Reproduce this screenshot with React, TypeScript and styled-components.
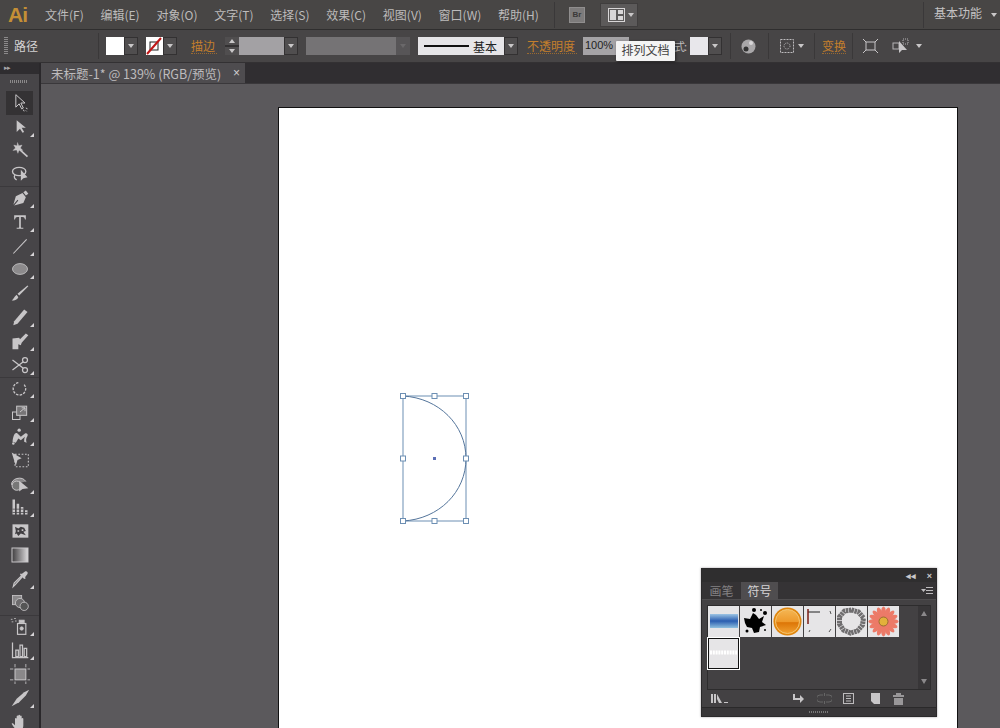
import React from 'react'
import styled, { createGlobalStyle } from 'styled-components'

const Global = createGlobalStyle`
  html, body { margin: 0; padding: 0; background: #5b595c; }
  * { box-sizing: border-box; }
`

const Page = styled.div`
  width: 1000px;
  height: 728px;
  overflow: hidden;
  position: relative;
  display: flex;
  flex-direction: column;
  font-family: "Noto Sans CJK SC", "Liberation Sans", sans-serif;
  font-size: 12px;
  color: #c4c2c3;
`

const MenuBar = styled.div`
  height: 30px;
  flex: none;
  display: flex;
  align-items: center;
  background: #484645;
  border-bottom: 1px solid #2f2e2e;
`

const Logo = styled.div`
  width: 45px;
  padding-left: 8px;
  font-family: "Liberation Sans", sans-serif;
  font-weight: 700;
  font-size: 21px;
  letter-spacing: -1px;
  color: #c48f36;
`

const Menu = styled.div`
  display: flex;
  gap: 16.75px;
  width: 509px;
  padding-bottom: 1px;
  color: #bdbbbb;
`

const Divider = styled.div<{ $h?: number; $ml?: number }>`
  width: 1px;
  height: ${p => p.$h ?? 26}px;
  flex: none;
  margin-left: ${p => p.$ml ?? 0}px;
  background: #3a3839;
`

const Bridge = styled.div`
  width: 16px;
  height: 16px;
  margin-left: 14px;
  background: #7d7b7b;
  border: 1px solid #908e8e;
  color: #3a3939;
  font: 700 8px "Liberation Sans", sans-serif;
  display: flex;
  align-items: center;
  justify-content: center;
`

const ArrangeButton = styled.div`
  width: 38px;
  height: 24px;
  margin-left: 15px;
  display: flex;
  align-items: center;
  gap: 2px;
  padding-left: 7px;
  background: #5c5a5a;
  border: 1px solid #403e3e;
`

const Workspace = styled.div`
  margin-left: auto;
  padding-right: 3px;
  display: flex;
  align-items: center;
  height: 100%;
`

const WorkspaceName = styled.span`
  margin-left: 10px;
  width: 56px;
  padding-bottom: 4px;
`

const ControlBar = styled.div`
  height: 33px;
  flex: none;
  display: flex;
  align-items: center;
  background: #474546;
  border-bottom: 1px solid #333133;
`

const Grip = styled.div`
  width: 4px;
  height: 18px;
  margin-left: 4px;
  background: repeating-linear-gradient(#8b898a 0 1px, transparent 1px 2px);
`

const PathLabel = styled.span`
  margin-left: 6px;
  width: 84px;
  color: #d4d2d3;
  padding-bottom: 1px;
`

const Swatch = styled.div<{ $w?: number; $ml?: number; $bg?: string }>`
  width: ${p => p.$w ?? 18}px;
  height: 18px;
  flex: none;
  margin-left: ${p => p.$ml ?? 0}px;
  background: ${p => p.$bg ?? '#fff'};
`

const Caret = styled.div<{ $w?: number; $dim?: boolean; $bg?: string; $ml?: number }>`
  width: ${p => p.$w ?? 14}px;
  height: 18px;
  flex: none;
  margin-left: ${p => p.$ml ?? 0}px;
  display: flex;
  align-items: center;
  justify-content: center;
  background: ${p => p.$bg ?? '#504e4f'};
  box-shadow: ${p => (p.$bg ? 'none' : 'inset 0 0 0 1px #333132')};
  &::after {
    content: '';
    border-left: 3.5px solid transparent;
    border-right: 3.5px solid transparent;
    border-top: 4px solid ${p => (p.$dim ? '#6a686a' : '#c9c7c8')};
  }
`

const Hot = styled.span<{ $ml: number; $w: number }>`
  margin-left: ${p => p.$ml}px;
  width: ${p => p.$w}px;
  flex: none;
  line-height: 15px;
  color: #c47f2c;
  border-bottom: 1px dotted #9a6a30;
`

const Stepper = styled.div`
  width: 14px;
  height: 18px;
  margin-left: 8px;
  display: flex;
  flex-direction: column;
  justify-content: space-between;
  background: #333132;
`

const Step = styled.div<{ $up?: boolean }>`
  height: 8px;
  display: flex;
  align-items: center;
  justify-content: center;
  background: #504e4f;
  &::after {
    content: '';
    border-left: 3px solid transparent;
    border-right: 3px solid transparent;
    border-${p => (p.$up ? 'bottom' : 'top')}: 4px solid #c9c7c8;
  }
`

const Field = styled.div<{ $w: number; $bg: string; $ml?: number }>`
  width: ${p => p.$w}px;
  height: 18px;
  flex: none;
  margin-left: ${p => p.$ml ?? 0}px;
  background: ${p => p.$bg};
`

const StrokeField = styled.div`
  width: 86px;
  height: 18px;
  margin-left: 8px;
  flex: none;
  display: flex;
  align-items: center;
  gap: 4px;
  padding-left: 6px;
  background: #e6e5e8;
  color: #222;
  font-size: 12px;
  &::before {
    content: '';
    width: 45px;
    height: 2px;
    background: #111;
  }
`

const Opacity = styled.div`
  width: 46px;
  height: 18px;
  margin-left: 6px;
  flex: none;
  padding-left: 2px;
  background: #a5a3a6;
  color: #1f1f1f;
  font: 11px/17px "Liberation Sans", sans-serif;
`

const StyleLabel = styled.span`
  margin-left: 45px;
  width: 11px;
  flex: none;
  color: #bdbbbb;
  font-size: 11px;
  letter-spacing: -1px;
  white-space: nowrap;
`

const IconSlot = styled.div<{ $ml: number }>`
  margin-left: ${p => p.$ml}px;
  flex: none;
  display: flex;
  align-items: center;
  gap: 3px;
`

const Tip = styled.div`
  position: absolute;
  left: 616px;
  top: 41px;
  width: 59px;
  height: 20px;
  background: #f4f4f4;
  color: #444;
  font-size: 12px;
  line-height: 18px;
  text-align: center;
  border-radius: 1px;
  box-shadow: 1px 1px 3px rgba(0, 0, 0, 0.5);
`

const Body = styled.div`
  flex: 1;
  min-height: 0;
  display: flex;
`

const ToolColumn = styled.div`
  width: 41px;
  flex: none;
  display: flex;
  flex-direction: column;
  background: #2f2d30;
  border-right: 2px solid #2a282b;
`

const ToolHead = styled.div`
  height: 11px;
  flex: none;
  padding-left: 4px;
  color: #a9a7a9;
  font: 7px/10px "Liberation Sans", sans-serif;
  letter-spacing: -1px;
`

const ToolPanel = styled.div`
  flex: 1;
  background: #474548;
  padding-top: 17px;
  overflow: hidden;
  position: relative;
  &::before {
    content: '';
    position: absolute;
    left: 10px;
    top: 6px;
    width: 18px;
    height: 3px;
    background: repeating-linear-gradient(90deg, #8b898a 0 1px, transparent 1px 2px);
  }
`

const Tool = styled.div<{ $active?: boolean; $more?: boolean; $sep?: boolean }>`
  height: 23.8px;
  width: 27px;
  margin-left: 6px;
  position: relative;
  display: flex;
  align-items: center;
  justify-content: center;
  background: ${p => (p.$active ? '#343234' : 'transparent')};
  &::before {
    content: ${p => (p.$sep ? "''" : 'none')};
    position: absolute;
    left: -6px;
    right: -6px;
    top: 0;
    height: 1px;
    background: #3b393c;
  }
  &::after {
    content: ${p => (p.$more ? "''" : 'none')};
    position: absolute;
    right: -1px;
    bottom: 2px;
    border-left: 4px solid transparent;
    border-bottom: 4px solid #d6d4d6;
  }
`

const Main = styled.div`
  flex: 1;
  min-width: 0;
  display: flex;
  flex-direction: column;
`

const TabStrip = styled.div`
  height: 21px;
  flex: none;
  display: flex;
  align-items: flex-end;
  background: #302e31;
  border-bottom: 1px solid #3a383b;
`

const DocTab = styled.div`
  width: 204px;
  height: 20px;
  display: flex;
  align-items: center;
  justify-content: space-between;
  padding: 0 5px 0 10px;
  background: #4e4c4f;
  color: #bdbbbd;
  font-size: 12.5px;
`

const Close = styled.span`
  font: 12px "Liberation Sans", sans-serif;
  color: #d0cfd0;
`

const Canvas = styled.div`
  flex: 1;
  min-height: 0;
  overflow: hidden;
  background: #5b595c;
  padding: 23px 0 0 237px;
`

const Artboard = styled.div`
  width: 680px;
  height: 640px;
  position: relative;
  background: #fff;
  border: 1px solid #111;
`

const Selection = styled.svg`
  position: absolute;
  left: 120px;
  top: 284px;
`

const Floating = styled.div`
  position: absolute;
  left: 701px;
  top: 568px;
  width: 236px;
  height: 149px;
  display: flex;
  flex-direction: column;
  background: #434143;
  border: 1px solid #2b2a2b;
  box-shadow: 0 0 2px rgba(70, 60, 70, 0.5);
`

const FloatHead = styled.div`
  height: 13px;
  flex: none;
  display: flex;
  justify-content: flex-end;
  align-items: center;
  gap: 11px;
  padding-right: 4px;
  background: #2f2e2f;
  color: #c9c7c9;
  font: 700 9px "Liberation Sans", sans-serif;
`

const FloatTabs = styled.div`
  height: 18px;
  flex: none;
  display: flex;
  align-items: stretch;
  background: #353335;
  border-bottom: 1px solid #4f4d4f;
`

const FloatTab = styled.div<{ $on?: boolean; $w: number }>`
  width: ${p => p.$w}px;
  display: flex;
  align-items: center;
  justify-content: center;
  background: ${p => (p.$on ? '#4f4d4f' : 'transparent')};
  color: ${p => (p.$on ? '#d5d3d5' : '#838183')};
  font-size: 12px;
`

const FloatMenu = styled.div`
  margin-left: auto;
  display: flex;
  align-items: center;
  padding-right: 3px;
`

const SymbolBox = styled.div`
  height: 85px;
  flex: none;
  margin: 5px 5px 0;
  display: flex;
  background: #434143;
  border: 1px solid #2d2c2d;
`

const SymbolGrid = styled.div`
  flex: 1;
  display: grid;
  grid-template-columns: repeat(6, 31px);
  grid-auto-rows: 31px;
  gap: 1px;
  align-content: start;
`

const SymbolCell = styled.div<{ $sel?: boolean }>`
  background: #e6e5e7;
  display: flex;
  align-items: center;
  justify-content: center;
  outline: ${p => (p.$sel ? '1px solid #fff' : 'none')};
  border: ${p => (p.$sel ? '1px solid #111' : 'none')};
`

const Scroll = styled.div`
  width: 12px;
  flex: none;
  display: flex;
  flex-direction: column;
  justify-content: space-between;
  align-items: center;
  padding: 5px 0;
  background: #383638;
`

const Arrow = styled.div<{ $up?: boolean }>`
  border-left: 3.5px solid transparent;
  border-right: 3.5px solid transparent;
  border-${p => (p.$up ? 'bottom' : 'top')}: 5px solid #8a888a;
`

const FloatFoot = styled.div`
  flex: 1;
  display: flex;
  align-items: center;
  padding: 0 0 0 9px;
`

const FootIcon = styled.div<{ $ml: number }>`
  margin-left: ${p => p.$ml}px;
  display: flex;
`

const FloatGrip = styled.div`
  height: 9px;
  flex: none;
  display: flex;
  justify-content: center;
  align-items: center;
  background: #383638;
  border-top: 1px solid #2a292a;
  &::after {
    content: '';
    width: 20px;
    height: 2px;
    background: repeating-linear-gradient(90deg, #777 0 1px, transparent 1px 2px);
  }
`

const c = '#c8c6c8'

const tools: { icon: React.ReactNode; more?: boolean; active?: boolean; sep?: boolean }[] = [
  { active: true, icon: <g fill="none" stroke={c} strokeWidth="1.2"><path d="M7 2v15l4-4 3 6 2-1-3-6h5z" /><path d="M16 20l1 2M19 18l2 1M19 21l1 1" /></g> },
  { more: true, icon: <path d="M8 4v14l4-4 3 5 2-1-3-5h5z" fill={c} /> },
  { icon: <g stroke={c} fill={c}><path d="M11 11l10 9" strokeWidth="2" /><path d="M9 3l1.5 4 4-1-2 3.5 3 3-4.500-.5-1.500 4-1.500-4-4.500.5 3-3-2-3.500 4 1z" strokeWidth=".4" /></g> },
  { icon: <g fill="none" stroke={c} strokeWidth="1.6"><ellipse cx="11" cy="9" rx="8" ry="5" /><path d="M6 13c-2 3 0 5 2 6" /><path d="M13 7v13l3-3 5-1z" fill={c} stroke="none" /></g> },
  { more: true, sep: true, icon: <g fill={c}><path d="M19 3l3 4-3 2-3-4z" /><path d="M15 6l4 5-3 7-11 3 5-6-1-1-5 6 3-10z" /></g> },
  { more: true, icon: <path d="M5 4h14v5h-1c-.5-2-1-3-3-3h-2v12c0 1 1 1 3 1v1H8v-1c2 0 3 0 3-1V6H9C7 6 6.500 7 6 9H5z" fill={c} /> },
  { more: true, icon: <path d="M4 21L20 4" stroke={c} strokeWidth="1.3" /> },
  { more: true, icon: <ellipse cx="12" cy="12" rx="9" ry="6.500" fill="#8c8a8c" stroke={c} strokeWidth="1" /> },
  { icon: <g fill={c}><path d="M21 3l1 1-11 11-2-2z" /><path d="M8 14l2 3c-1 3-4 4-8 4 2-1 3-5 6-7z" /></g> },
  { more: true, icon: <g fill={c}><path d="M17 3l4 3-12 14-5 2 1-5z" /></g> },
  { more: true, icon: <g fill={c}><path d="M3 9l8-1 1 2 7-7 3 2-8 9-1 3-3-1 0 6H3z" /></g> },
  { more: true, icon: <g fill="none" stroke={c} strokeWidth="1.500"><circle cx="18" cy="6" r="3" /><circle cx="18" cy="18" r="3" /><path d="M3 6l13 10M3 18L16 8" /></g> },
  { more: true, sep: true, icon: <g fill="none" stroke={c} strokeWidth="1.600" strokeDasharray="3 1.500"><path d="M17 8a7.500 7.500 0 1 1-7-2.500" /></g> },
  { more: true, icon: <g fill="none" stroke={c} strokeWidth="1.200"><rect x="3" y="12" width="9" height="9" /><rect x="8" y="5" width="12" height="11" fill="#777577" /><path d="M12 12l6-5M14 7h4v4" /></g> },
  { more: true, icon: <g fill={c}><path d="M3 19c1-8 3-12 6-10l4 4 5-4c2-1 4 1 3 3-2 3-2 5-1 8l-3-1c0-3 0-4 1-6l-5 4-3-2-3 5z" /><circle cx="11" cy="5" r="2" /><circle cx="4" cy="21" r="1.500" /></g> },
  { icon: <g><rect x="6" y="5" width="16" height="15" fill="none" stroke={c} strokeWidth="1.300" strokeDasharray="2 2" /><path d="M2 3l12 7-5 2-2 7z" fill={c} /></g> },
  { more: true, icon: <g stroke={c} fill="none" strokeWidth="1.200"><path d="M2 13a9 7 0 0 1 17-4" fill="#8a888a" /><circle cx="8" cy="14" r="5.500" fill="#777" /><path d="M11 8v13l4-3 7-1z" fill={c} stroke="none" /></g> },
  { more: true, icon: <g fill={c}><path d="M3 3h3v18H3zM8 8h3v13H8zM13 12h3v9h-3zM18 16h3v5h-3z" /><path d="M3 18h18v1H3zM3 14h13v1H3z" fill="#474548" /></g> },
  { icon: <g><rect x="3" y="4" width="19" height="16" fill={c} /><path d="M6 7l4 2 3-2 4 1 2 4-3 1 3 4-6-2-3 3-2-3-2 1 1-4z" fill="#403e41" /><path d="M9 11h2v2H9zM14 10h2v2h-2z" fill={c} /></g> },
  { icon: null },
  { more: true, icon: <g><path d="M15 9l-9 10-2 2 1-4 9-9" fill="none" stroke={c} strokeWidth="1.500" /><path d="M14 6l4-3c2-1 4 1 3 3l-3 4 1 1-2 1-5-5 1-2z" fill={c} /></g> },
  { icon: <g stroke={c}><rect x="3" y="3" width="11" height="11" fill="#8a888a" /><circle cx="12" cy="12" r="5.500" fill="#6d6b6d" /><circle cx="17" cy="16" r="5" fill="#555" /></g> },
  { more: true, sep: true, icon: <g stroke={c} fill="none"><rect x="9" y="9" width="10" height="13" strokeWidth="1.400" /><rect x="11" y="5" width="6" height="3" fill={c} /><circle cx="14" cy="15" r="2" fill={c} /><path d="M1 4h2M5 3h2M2 7h2M6 6h2" /></g> },
  { more: true, icon: <g fill="none" stroke={c} strokeWidth="1.500"><path d="M3 3v18h19" /><path d="M7 12h3v8H7zM12 6h3v14h-3zM17 10h3v10h-3z" /></g> },
  { icon: <g stroke={c} fill="none"><rect x="6" y="6" width="13" height="13" fill="#8a888a" strokeWidth="1.200" /><path d="M0 6h4M21 6h4M0 19h4M21 19h4M6 0v4M6 21v4M19 0v4M19 21v4" /></g> },
  { more: true, icon: <path d="M2 22l6-9 9-8 6-3-4 7-8 8z" fill={c} /> },
  { icon: <path d="M6 14V8c0-1 2-1 2 0v3-6c0-1 2-1 2 0v6-7c0-1 2-1 2 0v7-6c0-1 2-1 2 0v7-4c0-1 2-1 2 0v8c0 4-2 6-5 6-4 0-6-3-9-8 0-1 2-1 4 2z" fill={c} /> },
]

const menus = ['文件(F)', '编辑(E)', '对象(O)', '文字(T)', '选择(S)', '效果(C)', '视图(V)', '窗口(W)', '帮助(H)']

const handles = [
  [4, 4], [35.5, 4], [67, 4],
  [4, 66.5], [67, 66.5],
  [4, 129], [35.5, 129], [67, 129],
]

const petals = Array.from({ length: 16 }, (_, i) => i * 22.5)

const SelectedShape = () => (
  <Selection width="72" height="134" viewBox="0 0 72 134">
    <rect x="4" y="4" width="63" height="125" fill="none" stroke="#6d8fb3" />
    <path d="M4 4C40 6 67 33 67 66.500C67 100 40 127 4 129" fill="none" stroke="#54759b" />
    {handles.map(([x, y], i) => (
      <rect key={i} x={x - 2.5} y={y - 2.5} width="5" height="5" fill="#fff" stroke="#6d8fb3" />
    ))}
    <rect x="34" y="65" width="3" height="3" fill="#5c6fb5" />
  </Selection>
)

const Symbols = () => (
  <SymbolGrid>
    <SymbolCell>
      <svg width="31" height="31">
        <defs>
          <linearGradient id="s1" x2="0" y2="1">
            <stop offset="0" stopColor="#9cc4e4" />
            <stop offset=".5" stopColor="#2a5db0" />
            <stop offset="1" stopColor="#8fc0df" />
          </linearGradient>
        </defs>
        <rect x="2" y="8" width="28" height="14" fill="url(#s1)" />
      </svg>
    </SymbolCell>
    <SymbolCell>
      <svg width="31" height="31" fill="#000">
        <path d="M4 12l6 1 3-6 3 2 3 4 5-3-2 6 4 3-6 2-1 5-5 1-2-5-5-1-2-4z" />
        <circle cx="14" cy="4" r="2" /><circle cx="25" cy="7" r="2" /><circle cx="7" cy="25" r="1.500" /><circle cx="25" cy="24" r="1" /><circle cx="21" cy="4" r="1" />
      </svg>
    </SymbolCell>
    <SymbolCell>
      <svg width="31" height="31">
        <defs>
          <linearGradient id="s3" x2="0" y2="1">
            <stop offset="0" stopColor="#f4b654" />
            <stop offset=".5" stopColor="#ee9a2c" />
            <stop offset=".55" stopColor="#dd7607" />
            <stop offset="1" stopColor="#f0a030" />
          </linearGradient>
        </defs>
        <circle cx="15.500" cy="15.500" r="14" fill="#e0860e" />
        <circle cx="15.500" cy="15.500" r="12" fill="url(#s3)" stroke="#f6c672" />
      </svg>
    </SymbolCell>
    <SymbolCell>
      <svg width="31" height="31" fill="none" stroke="#555">
        <path d="M4 6h12" stroke="#222" />
        <path d="M4 3v15" stroke="#7a1c14" strokeWidth="1.500" />
        <path d="M26 5l1 3M5 26l1-2M25 26l2-3" />
      </svg>
    </SymbolCell>
    <SymbolCell>
      <svg width="31" height="31" fill="none">
        <path d="M15.500 4l7 2 5 6-1 7-5 6-7 2-7-3-4-6 0-7 5-6z" stroke="#6f6d6f" strokeWidth="5" strokeDasharray="2.500 .6" />
      </svg>
    </SymbolCell>
    <SymbolCell>
      <svg width="31" height="31">
        {petals.map(a => (
          <ellipse key={a} cx="15.500" cy="6.500" rx="2.400" ry="6" fill="#ec7a68" transform={`rotate(${a} 15.500 15.500)`} />
        ))}
        <circle cx="15.500" cy="15.500" r="4.500" fill="#e2b13b" stroke="#9b6a33" />
      </svg>
    </SymbolCell>
    <SymbolCell $sel>
      <svg width="29" height="29">
        <path d="M1 13.500h27" stroke="#fff" strokeWidth="4" strokeDasharray="2 .8" />
      </svg>
    </SymbolCell>
  </SymbolGrid>
)

const App: React.FC = () => (
  <Page>
    <Global />
    <MenuBar>
      <Logo>Ai</Logo>
      <Menu>
        {menus.map(m => (
          <span key={m}>{m}</span>
        ))}
      </Menu>
      <Divider />
      <Bridge>Br</Bridge>
      <ArrangeButton>
        <svg width="17" height="14" fill="none" stroke="#d8d6d7">
          <rect x=".5" y=".5" width="16" height="13" />
          <rect x="2" y="2" width="6" height="10" fill="#d8d6d7" stroke="none" />
          <rect x="10" y="2" width="5" height="4" fill="#d8d6d7" stroke="none" />
          <rect x="10" y="8" width="5" height="4" fill="#d8d6d7" stroke="none" />
        </svg>
        <Caret $w={8} $bg="transparent" />
      </ArrangeButton>
      <Workspace>
        <Divider />
        <WorkspaceName>基本功能</WorkspaceName>
        <Caret $w={7} $bg="transparent" />
      </Workspace>
    </MenuBar>

    <ControlBar>
      <Grip />
      <PathLabel>路径</PathLabel>
      <Divider $h={26} />
      <Swatch $ml={7} />
      <Caret />
      <Swatch $ml={8} $w={17}>
        <svg width="17" height="18" fill="none">
          <rect x="4" y="5" width="8" height="8" stroke="#222" />
          <path d="M1 17L15 1" stroke="#c01818" strokeWidth="2" />
        </svg>
      </Swatch>
      <Caret />
      <Hot $ml={14} $w={26}>描边</Hot>
      <Stepper>
        <Step $up />
        <Step />
      </Stepper>
      <Field $w={45} $bg="#a3a1a4" />
      <Caret />
      <Field $w={90} $bg="#757375" $ml={8} />
      <Caret $dim $bg="#575557" />
      <StrokeField>基本</StrokeField>
      <Caret />
      <Hot $ml={9} $w={50}>不透明度</Hot>
      <Opacity>100%</Opacity>
      <StyleLabel>式:</StyleLabel>
      <Swatch $ml={5} $bg="#e8e7eb" />
      <Caret />
      <Divider $h={26} $ml={8} />
      <IconSlot $ml={10}>
        <svg width="15" height="15">
          <circle cx="7.500" cy="7.500" r="7" fill="#a9a7a9" />
          <circle cx="5" cy="10" r="2.500" fill="#333" />
          <circle cx="10" cy="4" r="2" fill="#d8d6d8" />
        </svg>
      </IconSlot>
      <Divider $h={26} $ml={12} />
      <IconSlot $ml={11}>
        <svg width="14" height="14" fill="none" stroke="#bdbbbd">
          <rect x=".5" y=".5" width="13" height="13" strokeDasharray="2 1" />
          <circle cx="7" cy="7" r="3" strokeDasharray="1 1" />
        </svg>
        <Caret $w={7} $bg="transparent" />
      </IconSlot>
      <Divider $h={26} $ml={10} />
      <Hot $ml={7} $w={24}>变换</Hot>
      <Divider $h={26} $ml={6} />
      <IconSlot $ml={10}>
        <svg width="15" height="14" fill="none" stroke="#c8c6c8">
          <rect x="3" y="3" width="9" height="8" />
          <path d="M0 0l3 3M15 0l-3 3M0 14l3-3M15 14l-3-3" />
        </svg>
      </IconSlot>
      <IconSlot $ml={14}>
        <svg width="18" height="16" fill="none" stroke="#b5b3b5">
          <rect x="1" y="5" width="6" height="6" />
          <rect x="11" y="1" width="5" height="5" strokeDasharray="1 1" />
          <path d="M7 3v12l3-3 5 0z" fill="#c8c6c8" stroke="none" />
        </svg>
        <Caret $w={12} $bg="transparent" />
      </IconSlot>
    </ControlBar>

    <Body>
      <ToolColumn>
        <ToolHead>▸▸</ToolHead>
        <ToolPanel>
          {tools.map((t, i) => (
            <Tool key={i} $active={t.active} $more={t.more} $sep={t.sep}>
              {t.icon === null ? (
                <svg width="18" height="18" viewBox="0 0 18 18">
                  <defs>
                    <linearGradient id="tg">
                      <stop offset="0" stopColor="#3f3d3f" />
                      <stop offset="1" stopColor="#dcdadc" />
                    </linearGradient>
                  </defs>
                  <rect x="1" y="2" width="16" height="14" fill="url(#tg)" stroke={c} />
                </svg>
              ) : (
                <svg width="20" height="20" viewBox="0 0 24 24">{t.icon}</svg>
              )}
            </Tool>
          ))}
        </ToolPanel>
      </ToolColumn>
      <Main>
        <TabStrip>
          <DocTab>
            未标题-1* @ 139% (RGB/预览)
            <Close>×</Close>
          </DocTab>
        </TabStrip>
        <Canvas>
          <Artboard>
            <SelectedShape />
          </Artboard>
        </Canvas>
      </Main>
    </Body>

    <Tip>排列文档</Tip>

    <Floating>
      <FloatHead>
        <span>◂◂</span>
        <span>×</span>
      </FloatHead>
      <FloatTabs>
        <FloatTab $w={39}>画笔</FloatTab>
        <FloatTab $w={37} $on>符号</FloatTab>
        <FloatMenu>
          <svg width="12" height="8" fill="#bdbbbd">
            <path d="M0 2h5L2.500 5zM5 0h7v1H5zM5 3h7v1H5zM5 6h7v1H5z" />
          </svg>
        </FloatMenu>
      </FloatTabs>
      <SymbolBox>
        <Symbols />
        <Scroll>
          <Arrow $up />
          <Arrow />
        </Scroll>
      </SymbolBox>
      <FloatFoot>
        <FootIcon $ml={0}>
          <svg width="17" height="11" fill="#c8c6c8">
            <path d="M0 1h2v9H0zM3 1h2v9H3zM6 1l5 9H8L6 6zM13 9h4v1h-4z" />
          </svg>
        </FootIcon>
        <FootIcon $ml={65}>
          <svg width="11" height="9" fill="#c8c6c8"><path d="M0 0h2v4h5V1l4 4-4 4V6H0z" /></svg>
        </FootIcon>
        <FootIcon $ml={13}>
          <svg width="15" height="11" fill="none" stroke="#666"><path d="M6 2H3a3 3 0 0 0 0 7h3M9 2h3a3 3 0 0 1 0 7H9M7.500 0v3M7.500 8v3" /></svg>
        </FootIcon>
        <FootIcon $ml={11}>
          <svg width="11" height="11" fill="none" stroke="#bdbbbd"><rect x=".5" y=".5" width="10" height="10" /><path d="M3 3h5M3 5.500h5M3 8h5" /></svg>
        </FootIcon>
        <FootIcon $ml={15}>
          <svg width="11" height="11" fill="#c8c6c8"><path d="M2 0h9v11H5L2 8z" /></svg>
        </FootIcon>
        <FootIcon $ml={13}>
          <svg width="11" height="12" fill="#999799"><path d="M3 0h5v2h3v2H0V2h3zM1 5h9v7H1z" /></svg>
        </FootIcon>
      </FloatFoot>
      <FloatGrip />
    </Floating>
  </Page>
)

export default App
